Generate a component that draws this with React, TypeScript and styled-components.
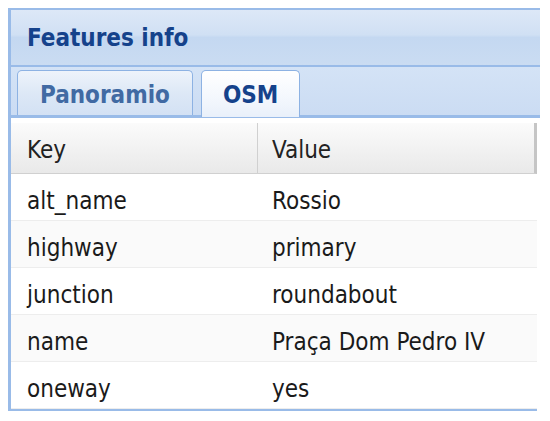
import React, { useState } from 'react';
import styled, { createGlobalStyle } from 'styled-components';

const GlobalStyle = createGlobalStyle`
   body {
      margin: 8px;
      background: #fff;
      font-family: "DejaVu Sans Condensed", "DejaVu Sans", sans-serif;
   }
`;

const Panel = styled.div`
   width: 532px;
   border-top: 2px solid #99bbe8;
   border-left: 3px solid #99bbe8;
   box-sizing: border-box;
`;

const Header = styled.div`
   height: 55px;
   display: flex;
   align-items: center;
   padding-left: 16px;
   background: linear-gradient(#dde8f7, #d0e0f4 45%, #c4d8f1 50%, #cadcf2);
   border-bottom: 2px solid #99bbe8;
   color: #15428b;
   font-weight: bold;
   font-size: 24px;
`;

const TabStrip = styled.div`
   display: flex;
   align-items: flex-end;
   gap: 8px;
   height: 48px;
   padding-left: 6px;
   background: linear-gradient(#d4e3f6, #cbdcf3);
   border-bottom: 3px solid #99bbe8;
`;

const Tab = styled.button<{ $active?: boolean }>`
   height: ${p => (p.$active ? '47px' : '45px')};
   margin-bottom: ${p => (p.$active ? '-2px' : '0')};
   padding: ${p => (p.$active ? '2px 21px 0' : '4px 22px 0')};
   border: 1px solid #8db2e3;
   border-bottom: none;
   border-radius: 5px 5px 0 0;
   background: ${p => (p.$active
      ? 'linear-gradient(#ffffff, #f3f7fd 60%, #e9f0fa)'
      : 'linear-gradient(#eef3fb, #dde8f6 50%, #d3e1f4)')};
   color: ${p => (p.$active ? '#15428b' : '#416aa3')};
   font-family: inherit;
   font-weight: bold;
   font-size: 24px;
   cursor: pointer;
`;

const Grid = styled.div`
   margin-top: 5px;
   width: 526px;
   border-bottom: 2px solid #99bbe8;
`;

const Row = styled.div<{ $alt?: boolean }>`
   display: grid;
   grid-template-columns: 246px 1fr;
   height: 47px;
   align-items: center;
   background: ${p => (p.$alt ? '#fafafa' : '#fff')};
   border-bottom: 1px solid #ededed;
   box-sizing: border-box;
   font-size: 24px;
   color: #1a1a1a;
`;

const HeadRow = styled(Row)`
   height: 51px;
   background: linear-gradient(#fbfbfb, #f2f2f2 50%, #e9e9e9);
   border-bottom: 1px solid #d0d0d0;
   border-right: 3px solid #c5c5c5;
   color: #222;
`;

const Cell = styled.div<{ $divider?: boolean; $head?: boolean }>`
   height: 100%;
   box-sizing: border-box;
   display: flex;
   align-items: center;
   padding-top: ${p => (p.$head ? '3px' : '7px')};
   padding-left: ${p => (p.$divider ? '14px' : '16px')};
   border-left: ${p => (p.$divider ? '1px solid #d0d0d0' : 'none')};
   white-space: nowrap;
`;

const ValueCell = styled(Cell)`
   padding-left: 15px;
`;

const rows: [string, string][] = [
   ['alt_name', 'Rossio'],
   ['highway', 'primary'],
   ['junction', 'roundabout'],
   ['name', 'Praça Dom Pedro IV'],
   ['oneway', 'yes'],
];

export default function App() {
   const [tab, setTab] = useState('OSM');
   return (<>
      <GlobalStyle />
      <Panel>
         <Header>Features info</Header>
         <TabStrip>
            {['Panoramio', 'OSM'].map(t =>
               <Tab key={t} $active={tab === t} onClick={() => setTab(t)}>{t}</Tab>)}
         </TabStrip>
         <Grid>
            <HeadRow>
               <Cell $head>Key</Cell>
               <Cell $head $divider>Value</Cell>
            </HeadRow>
            {rows.map(([k, v], i) =>
               <Row key={k} $alt={i % 2 === 1}>
                  <Cell>{k}</Cell>
                  <ValueCell>{v}</ValueCell>
               </Row>)}
         </Grid>
      </Panel>
   </>);
}
